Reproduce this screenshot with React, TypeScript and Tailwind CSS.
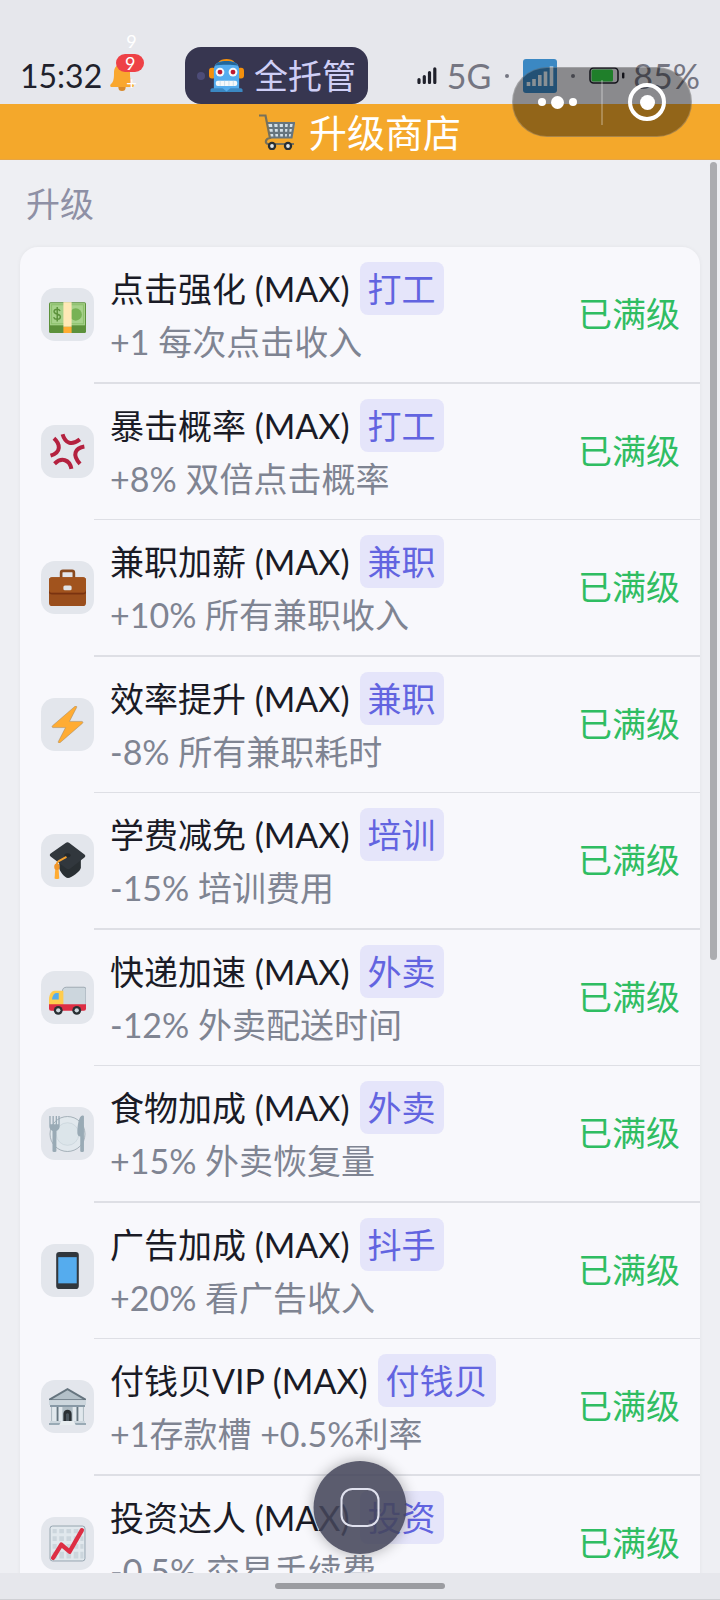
import type { ReactNode } from 'react'

function Emoji({ children, className = 'size-[37px]' }: { children: ReactNode; className?: string }) {
  return (
    <svg viewBox="0 0 36 36" className={className} aria-hidden="true">
      {children}
    </svg>
  )
}

function Money() {
  return (
    <Emoji>
      <rect y="27" width="36" height="9" rx="1.5" fill="#5c913b" />
      <rect y="6" width="36" height="24" rx="1.5" fill="#5c913b" />
      <rect x="1" y="7" width="34" height="21.5" fill="#a7d28b" />
      <rect x="2.5" y="8.5" width="31" height="18.5" fill="none" stroke="#8cc06c" strokeWidth="1" />
      <circle cx="26" cy="18" r="6" fill="#77b255" />
      <path d="M10.8 14.6c-.6-1.2-1.6-1.7-3-1.7-1.7 0-2.9.9-2.9 2.3 0 3.3 6.2 1.7 6.2 5 0 1.5-1.3 2.5-3.2 2.5-1.7 0-2.9-.7-3.4-2M8 10.8v14" fill="none" stroke="#5c913b" strokeWidth="1.4" />
      <path d="M14 6h8v24h-8z" fill="#ffe8b6" />
      <path d="M14 30h8v6h-8z" fill="#ffac33" />
    </Emoji>
  )
}

function Anger() {
  return (
    <Emoji>
      <g fill="none" stroke="#b4213f" strokeWidth="3.9" strokeLinejoin="round">
        <path d="M4.8 5.2c6.2 5.5 7.5 13.5-3.3 16.8" />
        <path d="M13.2 1.2c2.5 8.5 8.5 11.6 16.8 5" />
        <path d="M34.4 13.2c-9 1.6-12.3 8-4.2 16.8" />
        <path d="M5.4 29.9c6.8-6.5 14.6-4.3 16.4 5" />
      </g>
    </Emoji>
  )
}

function Briefcase() {
  return (
    <Emoji>
      <path d="M11.8 10V3.6c0-1 .7-1.8 1.7-1.8h9c1 0 1.7.8 1.7 1.8V10" fill="none" stroke="#8a4b20" strokeWidth="2.6" />
      <rect y="8" width="36" height="28" rx="3" fill="#9a4e1c" />
      <path d="M0 11a3 3 0 0 1 3-3h30a3 3 0 0 1 3 3v9c0 2-1.5 3-3 3H3c-1.5 0-3-1-3-3z" fill="#a1531d" />
      <path d="M0 20.5c0 2 1.5 2.7 3 2.7h30c1.5 0 3-.7 3-2.7v2c0 1.5-1.5 2.2-3 2.2H3c-1.5 0-3-.7-3-2.2z" fill="#7a3310" />
      <rect x="14" y="16" width="8" height="4.6" rx="1.5" fill="#dfe3e6" />
    </Emoji>
  )
}

function Bolt() {
  return (
    <Emoji>
      <path
        d="M32.938 15.651C32.792 15.26 32.418 15 32 15H19.925L26.89 1.458c.219-.426.106-.947-.271-1.243C26.437.071 26.218 0 26 0c-.233 0-.466.082-.653.243L18 6.588 3.347 19.243c-.316.273-.43.714-.284 1.105S3.582 21 4 21h12.075L9.11 34.542c-.219.426-.106.947.271 1.243.182.144.401.215.619.215.233 0 .466-.082.653-.243L18 29.412l14.653-12.655c.317-.273.43-.714.285-1.106z"
        fill="#ffac33"
        stroke="#a08a68"
        strokeWidth=".5"
      />
    </Emoji>
  )
}

function Graduation() {
  return (
    <Emoji>
      <path d="M10 17v8c0 3 5 10 8.5 10S31 28 31 25v-9z" fill="#292f33" />
      <path d="M16.2.9c1.2-.9 2.4-.9 3.6 0l14.7 11.3c1.1.9 1.1 2 0 2.9L20.4 26c-1.2.9-2.4.8-3.6-.1L1.6 14c-1.1-.9-1.1-1.900 0-2.800z" fill="#31373d" />
      <ellipse cx="18" cy="13" rx="3" ry="2" fill="#23282c" />
      <path d="M17 14.5 9.5 18.5c-1.2.8-2 1.7-2 3.5V26" fill="none" stroke="#f4a02f" strokeWidth="1.9" />
      <path d="M6.2 24.5c1-.8 2-.8 3 0l.8 11c-1.5.8-3.2.8-4.6 0z" fill="#ffac33" />
      <ellipse cx="7.7" cy="24" rx="2.6" ry="3.2" fill="#f0952a" />
    </Emoji>
  )
}

function Truck() {
  return (
    <Emoji>
      <path d="M13 12c0-2.5 1.5-4 4-4h17a2 2 0 0 1 2 2v16H13z" fill="#ccd6dd" stroke="#8b98a1" strokeWidth=".7" />
      <path d="M14 11.5V26H0v-6c0-4 2-8.5 5.5-8.5z" fill="#ffcc4d" />
      <path d="M9.5 13.5V20H3c0-2.5 1.5-6.5 4-6.5z" fill="#55acee" />
      <path d="M0 24.5h36V29a2 2 0 0 1-2 2H2a2 2 0 0 1-2-2z" fill="#dd2e44" />
      <circle cx="9" cy="30.5" r="4.3" fill="#292f33" />
      <circle cx="9" cy="30.5" r="2.1" fill="#ccd6dd" />
      <circle cx="27" cy="30.5" r="4.3" fill="#292f33" />
      <circle cx="27" cy="30.5" r="2.1" fill="#ccd6dd" />
    </Emoji>
  )
}

function Plate() {
  return (
    <Emoji>
      <circle cx="18" cy="18.5" r="17" fill="#e1e8ed" stroke="#8d9ba5" strokeWidth=".7" />
      <circle cx="18" cy="18.5" r="11" fill="#dce5ea" stroke="#c7d2d9" strokeWidth=".7" />
      <path d="M.3 1h1.3v8h1.8V1h1.3v8h1.8V1h1.3v8h1.3V1h1.3v10c0 2.500-1.500 4-3.200 4.500V35c0 1.300-3.800 1.300-3.800 0V15.500C1.800 15 .3 13.500.3 11z" fill="#99aab5" />
      <path d="M34 1.5V35c0 1.3-3.6 1.3-3.6 0V21c-1.7-.3-2.8-1.6-2.8-3.500C27.600 10 29 1 32.500.5c.9 0 1.500.4 1.500 1z" fill="#99aab5" />
    </Emoji>
  )
}

function Phone() {
  return (
    <Emoji>
      <rect x="7" width="22" height="36" rx="3" fill="#31373d" />
      <path d="M9 5h18v25.5H9z" fill="#55acee" />
    </Emoji>
  )
}

function Bank() {
  return (
    <Emoji>
      <path d="M2 16h32v16H2z" fill="#aebbc3" />
      <path d="M18 0 36 10.5V12H0v-1.5z" fill="#66757f" />
      <path d="M18 2.2 33 11H3z" fill="#b3c0c8" />
      <path d="M0 12h36v4.5H0z" fill="#ccd6dd" />
      <path d="M1 16.5h34v2H1z" fill="#8899a6" />
      <path d="M3 18.5h4.5V32H3zM9.5 18.5H13V32H9.5zM23 18.5h3.5V32H23zM28.5 18.5H33V32h-4.5z" fill="#e1e8ed" />
      <path d="M7.5 18.5H9V32H7.5zM27 18.5h1.5V32H27z" fill="#66757f" />
      <path d="M14 32v-7c0-5 8-5 8 0v7z" fill="#292f33" />
      <path d="M16.5 32v-6c0-2 3-2 3 0v6z" fill="#4a555d" />
      <path d="M1 32h34v2H1z" fill="#ccd6dd" />
      <path d="M0 34h36v2H0z" fill="#99aab5" />
      <path d="M12 32h12l2 4H10z" fill="#e8edf0" />
    </Emoji>
  )
}

function Chart() {
  return (
    <Emoji>
      <rect x="1" y="1" width="34" height="34" rx="2.5" fill="#e1e8ed" stroke="#8697a3" strokeWidth=".8" />
      <path
        d="M3.5 4h4v4h-4zM10 4h4.5v4H10zM17 4h4.5v4H17zM24 4h4.5v4H24zM30.5 4h3v4h-3zM3.5 11h4v4.5h-4zM10 11h4.5v4.5H10zM17 11h4.5v4.5H17zM24 11h4.5v4.5H24zM30.5 11h3v4.5h-3zM3.5 18.5h4V23h-4zM10 18.5h4.5V23H10zM17 18.5h4.5V23H17zM24 18.5h4.5V23H24zM30.5 18.5h3V23h-3zM3.5 26h4v6.5h-4zM10 26h4.5v6.5H10zM17 26h4.5v6.5H17zM24 26h4.5v6.5H24zM30.5 26h3v6.5h-3z"
        fill="#ccd6dd"
      />
      <path d="m4 32 8-13 8 7L32 5" fill="none" stroke="#dd2e44" strokeWidth="4.2" strokeLinecap="round" strokeLinejoin="round" />
    </Emoji>
  )
}

function Robot() {
  return (
    <Emoji className="size-[35px]">
      <path d="M10 4c2-4 14-4 16 0z" fill="#f4900c" />
      <rect y="10" width="7" height="11" rx="3" fill="#f4900c" />
      <rect x="29" y="10" width="7" height="11" rx="3" fill="#f4900c" />
      <path d="M5 12c0-6 4-9 13-9s13 3 13 9v20H5z" fill="#55acee" />
      <path d="M6 8c2-3.5 6-5 12-5s10 1.5 12 5c-5-1.5-19-1.5-24 0z" fill="#226699" />
      <circle cx="11.3" cy="14.5" r="4.5" fill="#f5f8fa" />
      <circle cx="24.7" cy="14.5" r="4.5" fill="#f5f8fa" />
      <circle cx="11.3" cy="14.5" r="2.5" fill="#be1931" />
      <circle cx="24.7" cy="14.5" r="2.5" fill="#be1931" />
      <rect x="7" y="23.5" width="22" height="5.2" rx="2" fill="#f5f8fa" />
      <path d="M11.5 23.5v5M16 23.5v5M20.5 23.5v5M25 23.5v5" stroke="#c3d8e6" strokeWidth=".8" />
      <path d="M1.5 35v-2c0-1.5 1-2 2.5-2h28c1.5 0 2.5.5 2.5 2v2z" fill="#3b88c3" />
      <path d="M13 30h10l-5 4.5z" fill="#55acee" />
    </Emoji>
  )
}

function Cart() {
  return (
    <Emoji className="size-9">
      <path d="M8 9h28l-3.5 15H11z" fill="#d5e1e8" />
      <path d="M8 9h27l-2.5 14.5H11.5M9 14h25M10 18.8h23M14 9l1.5 14M19.5 9l.7 14M25 9v14M30 9l-1.2 14" fill="none" stroke="#66757f" strokeWidth="2.2" />
      <path d="M0 1.5h6.5l4.5 22.5c-5 .5-5.5 6-1.5 6H35" fill="none" stroke="#77715a" strokeWidth="2.2" />
      <circle cx="13" cy="32" r="4.2" fill="#292f33" />
      <circle cx="13" cy="32" r="1.9" fill="#e1e8ed" />
      <circle cx="29" cy="32" r="4.2" fill="#292f33" />
      <circle cx="29" cy="32" r="1.9" fill="#e1e8ed" />
    </Emoji>
  )
}

function Bell() {
  return (
    <svg viewBox="0 0 24 32" className="h-8 w-6" aria-hidden="true">
      <circle cx="12" cy="27.5" r="3.6" fill="#d98a2b" />
      <path d="M12 2c1.5 0 2.5 1 2.5 2.3C18.5 5.5 20 9 20 13c0 7 1 9 3 11 1.5 1.6.8 3-1 3H2c-1.8 0-2.5-1.4-1-3 2-2 3-4 3-11 0-4 1.5-7.5 5.5-8.7C9.5 3 10.5 2 12 2z" fill="#f9a72f" />
    </svg>
  )
}

const upgrades = [
  { icon: <Money />, name: '点击强化', tag: '打工', effect: '+1 每次点击收入' },
  { icon: <Anger />, name: '暴击概率', tag: '打工', effect: '+8% 双倍点击概率' },
  { icon: <Briefcase />, name: '兼职加薪', tag: '兼职', effect: '+10% 所有兼职收入' },
  { icon: <Bolt />, name: '效率提升', tag: '兼职', effect: '-8% 所有兼职耗时' },
  { icon: <Graduation />, name: '学费减免', tag: '培训', effect: '-15% 培训费用' },
  { icon: <Truck />, name: '快递加速', tag: '外卖', effect: '-12% 外卖配送时间' },
  { icon: <Plate />, name: '食物加成', tag: '外卖', effect: '+15% 外卖恢复量' },
  { icon: <Phone />, name: '广告加成', tag: '抖手', effect: '+20% 看广告收入' },
  { icon: <Bank />, name: '付钱贝VIP', tag: '付钱贝', effect: '+1存款槽 +0.5%利率' },
  { icon: <Chart />, name: '投资达人', tag: '投资', effect: '-0.5% 交易手续费' },
]

function StatusBar() {
  return (
    <div className="flex h-[104px] shrink-0 items-end justify-between px-5">
      <div className="flex h-[57px] items-center">
        <span className="text-[32px] text-[#20212b]">15:32</span>
        <span className="relative ml-2 mr-0.5">
          <Bell />
          <span className="absolute -top-1.5 left-1.5 flex h-[18px] w-7 items-center justify-center rounded-full bg-[#ee4146] text-[18px] leading-none text-white">9</span>
          <span className="absolute -top-7 left-4 text-[18px] leading-none text-white">9</span>
          <span className="absolute bottom-0 left-4 text-[18px] leading-none text-white">+</span>
        </span>
      </div>

      <div className="flex h-[57px] items-center rounded-2xl bg-[#373650] px-3">
        <span className="size-2 rounded-full bg-[#4d4c78]" />
        <span className="ml-1 mr-2.5">
          <Robot />
        </span>
        <span className="text-[#cfcff6]">全托管</span>
      </div>

      <div className="flex h-[57px] items-center text-[#757682]">
        <svg viewBox="0 0 20 17" className="mr-2.5 h-[17px] w-5" aria-label="signal">
          <path d="M2 12.5v3M7.3 9.5v6M12.5 5.5v10M17.8 1.8v13.7" stroke="#20212b" strokeWidth="3.2" strokeLinecap="round" />
        </svg>
        <span>5G</span>
        <span className="mx-3.5 size-1 rounded-full bg-[#757682]" />
        <svg viewBox="0 0 34 34" className="size-[34px]" aria-label="network">
          <rect width="34" height="34" rx="3" fill="#3b88c3" />
          <path d="M5.5 23v4M11 20v7M16.8 16v11M22.5 12.5V27M28.5 7.5V27" stroke="#e4f0f8" strokeWidth="3.6" />
        </svg>
        <span className="mx-3.5 size-1 rounded-full bg-[#757682]" />
        <svg viewBox="0 0 36 17" className="mr-2 h-[17px] w-9" aria-label="battery">
          <rect x="1" y="1" width="28" height="15" rx="3.5" fill="none" stroke="#20212b" strokeWidth="1.5" />
          <rect x="2.5" y="2.5" width="21.5" height="12" rx="1.5" fill="#34d446" />
          <rect x="33" y="5.5" width="2.4" height="6" rx="1" fill="#20212b" />
        </svg>
        <span>85%</span>
      </div>
    </div>
  )
}

function MiniProgramCapsule() {
  return (
    <div className="absolute right-7 top-[67px] flex h-[70px] w-[180px] items-center rounded-full border border-white/20 bg-black/40">
      <button type="button" aria-label="更多" className="flex flex-1 items-center justify-center gap-[5px]">
        <span className="size-2 rounded-full bg-white" />
        <span className="size-[13px] rounded-full bg-white" />
        <span className="size-2 rounded-full bg-white" />
      </button>
      <span className="h-[45px] w-0.5 bg-white/25" />
      <button type="button" aria-label="关闭" className="flex flex-1 items-center justify-center">
        <span className="flex size-[38px] items-center justify-center rounded-full border-4 border-white">
          <span className="size-[15px] rounded-full bg-white" />
        </span>
      </button>
    </div>
  )
}

export default function App() {
  return (
    <div className="relative flex h-screen flex-col overflow-hidden bg-[#e6e7ec] font-['Lato','Noto_Sans_CJK_SC',sans-serif] text-[34px] leading-none">
      <StatusBar />

      <header className="flex h-14 shrink-0 items-center justify-center gap-3.5 border-b border-[#e6a545] bg-[#f4a82b]">
        <Cart />
        <h1 className="text-[38px] text-white">升级商店</h1>
      </header>

      <main className="relative min-h-0 flex-1 overflow-hidden bg-[#eeeff3] px-5">
        <h2 className="pb-[17px] pl-1.5 pt-[18px] leading-[52px] text-[#8e90a5]">升级</h2>
        <ul className="rounded-t-[18px] bg-[#f8f8fc] shadow-[0_0_4px_rgba(0,0,0,0.05)]">
          {upgrades.map((item) => (
            <li key={item.name} className="group flex items-center pl-[21px]">
              <span className="mb-0.5 flex size-[53px] shrink-0 items-center justify-center rounded-[14px] bg-[#e3e6ec]">
                {item.icon}
              </span>
              <div className="flex flex-1 items-center justify-between border-b border-[#dedfe5] pb-3.5 pl-4 pr-5 pt-[15px] group-odd:border-b-2">
                <div>
                  <div className="flex h-[53px] items-center gap-2.5 text-[#1a1b26]">
                    <span>{item.name} (MAX)</span>
                    <span className="rounded-lg bg-[#e5e5fa] px-2 leading-[53px] text-[#6264e0]">{item.tag}</span>
                  </div>
                  <p className="leading-[53px] text-[#7f8492]">{item.effect}</p>
                </div>
                <span className="mb-0.5 text-[#2fbd62]">已满级</span>
              </div>
            </li>
          ))}
        </ul>
        <span className="absolute right-[3px] top-0.5 h-[798px] w-[7px] rounded-full bg-[#abacb0]" />
      </main>

      <footer className="flex h-[27px] shrink-0 items-center justify-center border-b border-[#cfd0d4]">
        <span className="h-1.5 w-[170px] rounded-full bg-[#9b9ca1]" />
      </footer>

      <MiniProgramCapsule />

      <button
        type="button"
        aria-label="悬浮球"
        className="absolute bottom-[46px] left-1/2 flex size-[93px] -translate-x-1/2 items-center justify-center rounded-full bg-[#44465a]/88 shadow-[0_0_14px_rgba(0,0,0,0.3)]"
      >
        <span className="size-[39px] rounded-xl border-2 border-[#e0e1ee]" />
      </button>
    </div>
  )
}
